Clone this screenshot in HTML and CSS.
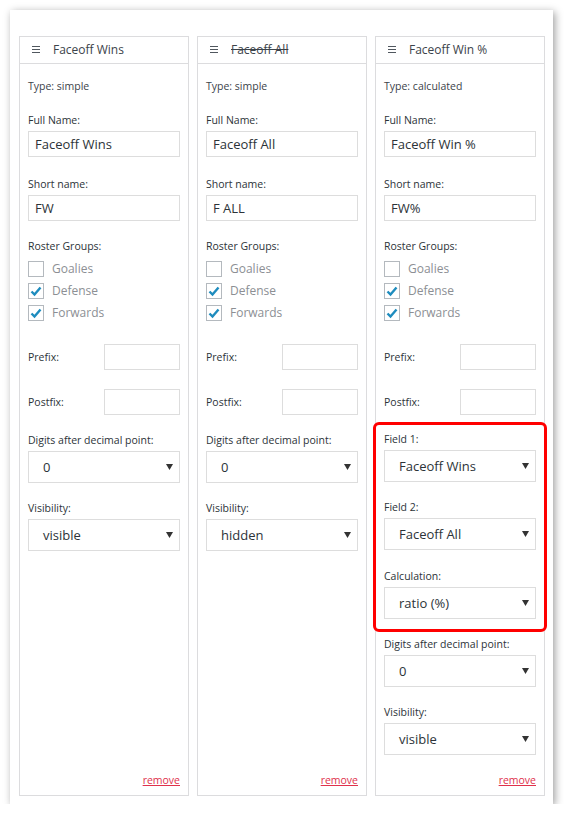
FILE: index.html
```html
<!DOCTYPE html>
<html>
<head>
<meta charset="utf-8">
<link rel="stylesheet" href="styles.css">
</head>
<body>
<div class="panel">
  <div class="cards">
    <!-- Card 1 -->
    <div class="card">
      <div class="card-head">
        <svg class="menu" width="8" height="7" viewBox="0 0 8 7"><rect x="0" y="0" width="8" height="1" fill="#50575e"/><rect x="0" y="3" width="8" height="1" fill="#50575e"/><rect x="0" y="6" width="8" height="1" fill="#50575e"/></svg>
        <span class="title">Faceoff Wins</span>
      </div>
      <div class="card-body">
        <div class="type"><span class="type-key">Type:</span> simple</div>
        <div class="field f-full"><div class="lbl">Full Name:</div><input class="txt" type="text" value="Faceoff Wins"></div>
        <div class="field f-short"><div class="lbl">Short name:</div><input class="txt" type="text" value="FW"></div>
        <div class="field f-roster"><div class="lbl">Roster Groups:</div>
          <div class="checks">
            <div class="chk"><span class="box"></span><span class="clbl">Goalies</span></div>
            <div class="chk"><span class="box"><svg width="14" height="14" viewBox="0 0 14 14"><path d="M2.5 7.5 L5.5 10.5 L11.5 3.5" fill="none" stroke="#1e8cbe" stroke-width="2.4"/></svg></span><span class="clbl">Defense</span></div>
            <div class="chk"><span class="box"><svg width="14" height="14" viewBox="0 0 14 14"><path d="M2.5 7.5 L5.5 10.5 L11.5 3.5" fill="none" stroke="#1e8cbe" stroke-width="2.4"/></svg></span><span class="clbl">Forwards</span></div>
          </div>
        </div>
        <div class="row r-prefix"><span class="lbl">Prefix:</span><input class="txt small" type="text" value=""></div>
        <div class="row r-postfix"><span class="lbl">Postfix:</span><input class="txt small" type="text" value=""></div>
        <div class="field f-sel first-sel"><div class="lbl">Digits after decimal point:</div><div class="sel"><span>0</span><svg class="arrow" width="7" height="6" viewBox="0 0 7 6"><polygon points="0,0 7,0 3.5,6" fill="#333"/></svg></div></div>
        <div class="field f-sel"><div class="lbl">Visibility:</div><div class="sel"><span>visible</span><svg class="arrow" width="7" height="6" viewBox="0 0 7 6"><polygon points="0,0 7,0 3.5,6" fill="#333"/></svg></div></div>
        <div class="foot"><a class="remove" href="#">remove</a></div>
      </div>
    </div>
    <!-- Card 2 -->
    <div class="card">
      <div class="card-head">
        <svg class="menu" width="8" height="7" viewBox="0 0 8 7"><rect x="0" y="0" width="8" height="1" fill="#50575e"/><rect x="0" y="3" width="8" height="1" fill="#50575e"/><rect x="0" y="6" width="8" height="1" fill="#50575e"/></svg>
        <span class="title struck">Faceoff All</span>
      </div>
      <div class="card-body">
        <div class="type"><span class="type-key">Type:</span> simple</div>
        <div class="field f-full"><div class="lbl">Full Name:</div><input class="txt" type="text" value="Faceoff All"></div>
        <div class="field f-short"><div class="lbl">Short name:</div><input class="txt" type="text" value="F ALL"></div>
        <div class="field f-roster"><div class="lbl">Roster Groups:</div>
          <div class="checks">
            <div class="chk"><span class="box"></span><span class="clbl">Goalies</span></div>
            <div class="chk"><span class="box"><svg width="14" height="14" viewBox="0 0 14 14"><path d="M2.5 7.5 L5.5 10.5 L11.5 3.5" fill="none" stroke="#1e8cbe" stroke-width="2.4"/></svg></span><span class="clbl">Defense</span></div>
            <div class="chk"><span class="box"><svg width="14" height="14" viewBox="0 0 14 14"><path d="M2.5 7.5 L5.5 10.5 L11.5 3.5" fill="none" stroke="#1e8cbe" stroke-width="2.4"/></svg></span><span class="clbl">Forwards</span></div>
          </div>
        </div>
        <div class="row r-prefix"><span class="lbl">Prefix:</span><input class="txt small" type="text" value=""></div>
        <div class="row r-postfix"><span class="lbl">Postfix:</span><input class="txt small" type="text" value=""></div>
        <div class="field f-sel first-sel"><div class="lbl">Digits after decimal point:</div><div class="sel"><span>0</span><svg class="arrow" width="7" height="6" viewBox="0 0 7 6"><polygon points="0,0 7,0 3.5,6" fill="#333"/></svg></div></div>
        <div class="field f-sel"><div class="lbl">Visibility:</div><div class="sel"><span>hidden</span><svg class="arrow" width="7" height="6" viewBox="0 0 7 6"><polygon points="0,0 7,0 3.5,6" fill="#333"/></svg></div></div>
        <div class="foot"><a class="remove" href="#">remove</a></div>
      </div>
    </div>
    <!-- Card 3 -->
    <div class="card">
      <div class="card-head">
        <svg class="menu" width="8" height="7" viewBox="0 0 8 7"><rect x="0" y="0" width="8" height="1" fill="#50575e"/><rect x="0" y="3" width="8" height="1" fill="#50575e"/><rect x="0" y="6" width="8" height="1" fill="#50575e"/></svg>
        <span class="title">Faceoff Win %</span>
      </div>
      <div class="card-body">
        <div class="type"><span class="type-key">Type:</span> calculated</div>
        <div class="field f-full"><div class="lbl">Full Name:</div><input class="txt" type="text" value="Faceoff Win %"></div>
        <div class="field f-short"><div class="lbl">Short name:</div><input class="txt" type="text" value="FW%"></div>
        <div class="field f-roster"><div class="lbl">Roster Groups:</div>
          <div class="checks">
            <div class="chk"><span class="box"></span><span class="clbl">Goalies</span></div>
            <div class="chk"><span class="box"><svg width="14" height="14" viewBox="0 0 14 14"><path d="M2.5 7.5 L5.5 10.5 L11.5 3.5" fill="none" stroke="#1e8cbe" stroke-width="2.4"/></svg></span><span class="clbl">Defense</span></div>
            <div class="chk"><span class="box"><svg width="14" height="14" viewBox="0 0 14 14"><path d="M2.5 7.5 L5.5 10.5 L11.5 3.5" fill="none" stroke="#1e8cbe" stroke-width="2.4"/></svg></span><span class="clbl">Forwards</span></div>
          </div>
        </div>
        <div class="row r-prefix"><span class="lbl">Prefix:</span><input class="txt small" type="text" value=""></div>
        <div class="row r-postfix"><span class="lbl">Postfix:</span><input class="txt small" type="text" value=""></div>
        <div class="highlight">
          <div class="field f-sel hl-first"><div class="lbl">Field 1:</div><div class="sel"><span>Faceoff Wins</span><svg class="arrow" width="7" height="6" viewBox="0 0 7 6"><polygon points="0,0 7,0 3.5,6" fill="#333"/></svg></div></div>
          <div class="field f-sel hl-second"><div class="lbl">Field 2:</div><div class="sel"><span>Faceoff All</span><svg class="arrow" width="7" height="6" viewBox="0 0 7 6"><polygon points="0,0 7,0 3.5,6" fill="#333"/></svg></div></div>
          <div class="field f-sel hl-third"><div class="lbl">Calculation:</div><div class="sel"><span>ratio (%)</span><svg class="arrow" width="7" height="6" viewBox="0 0 7 6"><polygon points="0,0 7,0 3.5,6" fill="#333"/></svg></div></div>
        </div>
        <div class="field f-sel after-hl"><div class="lbl">Digits after decimal point:</div><div class="sel"><span>0</span><svg class="arrow" width="7" height="6" viewBox="0 0 7 6"><polygon points="0,0 7,0 3.5,6" fill="#333"/></svg></div></div>
        <div class="field f-sel"><div class="lbl">Visibility:</div><div class="sel"><span>visible</span><svg class="arrow" width="7" height="6" viewBox="0 0 7 6"><polygon points="0,0 7,0 3.5,6" fill="#333"/></svg></div></div>
        <div class="foot"><a class="remove" href="#">remove</a></div>
      </div>
    </div>
  </div>
</div>
</body>
</html>
```

FILE: styles.css
```css
html, body {
  margin: 0;
  padding: 0;
  background: #ffffff;
}
body {
  font-family: "Open Sans", "Noto Sans", "DejaVu Sans", sans-serif;
  color: #3c434a;
}
.panel {
  margin: 10px 0 0 10px;
  width: 543px;
  box-sizing: border-box;
  padding: 26px 8px 8px 9px;
  background: #ffffff;
  box-shadow: 2px 2px 8px rgba(0, 0, 0, 0.38);
}
.cards {
  display: grid;
  grid-template-columns: 170px 170px 170px;
  column-gap: 8px;
  align-items: stretch;
}
.card {
  border: 1px solid #dcdcde;
  background: #fff;
  display: flex;
  flex-direction: column;
}
.card-head {
  height: 26px;
  border-bottom: 1px solid #dcdcde;
  display: flex;
  align-items: center;
  padding-left: 12px;
}
.menu {
  display: block;
  margin-top: -1px;
}
.title {
  margin-left: 13px;
  font-size: 12px;
  color: #3c434a;
  line-height: 16px;
}
.struck {
  text-decoration: line-through;
}
.card-body {
  flex: 1;
  display: flex;
  flex-direction: column;
  padding: 14px 8px 7px 8px;
}
.type {
  font-size: 10.5px;
  line-height: 16px;
  color: #3c434a;
}
.lbl {
  font-size: 10.5px;
  line-height: 16px;
  color: #2c3338;
}
.field .lbl {
  margin-bottom: 3px;
}
.f-full { margin-top: 18px; }
.f-short { margin-top: 19px; }
.f-roster { margin-top: 17px; }
.txt {
  display: block;
  box-sizing: border-box;
  width: 152px;
  height: 26px;
  margin: 0;
  border: 1px solid #dddddd;
  border-radius: 0;
  padding: 0 6px;
  font-family: "Open Sans", "Noto Sans", "DejaVu Sans", sans-serif;
  font-size: 13px;
  color: #2c3338;
  background: #fff;
  outline: none;
  box-shadow: none;
}
.txt.small {
  width: 76px;
}
.checks {
  margin-top: 4px;
}
.chk {
  height: 22px;
  display: flex;
  align-items: center;
}
.box {
  width: 16px;
  height: 16px;
  box-sizing: border-box;
  border: 1px solid #b4b9be;
  background: #fff;
  display: flex;
  align-items: center;
  justify-content: center;
}
.box svg {
  display: block;
}
.clbl {
  margin-left: 8px;
  font-size: 12px;
  color: #8c8f94;
  line-height: 16px;
}
.row {
  display: flex;
  align-items: center;
  justify-content: space-between;
}
.r-prefix { margin-top: 20px; }
.r-postfix { margin-top: 19px; }
.f-sel { margin-top: 17px; }
.first-sel { margin-top: 17px; }
.sel {
  box-sizing: border-box;
  width: 152px;
  height: 32px;
  border: 1px solid #dddddd;
  background: #fff;
  display: flex;
  align-items: center;
  justify-content: space-between;
  padding: 0 6px 0 14px;
  font-size: 13px;
  color: #2c3338;
}
.arrow {
  display: block;
}
.highlight {
  margin: 7px -11px 0 -11px;
  border: 3px solid #ff0000;
  border-radius: 6px;
  padding: 6px 8px 10px 8px;
}
.highlight .hl-first { margin-top: 0; }
.highlight .hl-second { margin-top: 17px; }
.highlight .hl-third { margin-top: 18px; }
.after-hl { margin-top: 4px; }
.foot {
  margin-top: auto;
  padding-top: 15px;
  text-align: right;
  line-height: 16px;
}
.remove {
  font-size: 10.5px;
  color: #e0314b;
  text-decoration: underline;
}
```
